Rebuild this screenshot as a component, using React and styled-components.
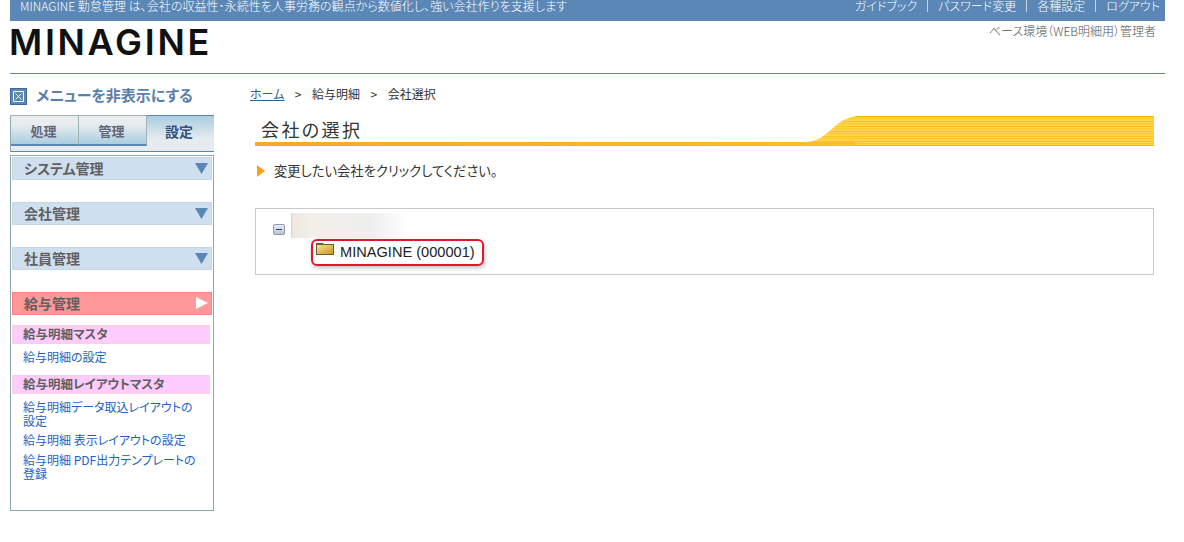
import React from "react";
import styled, { createGlobalStyle } from "styled-components";

const Global = createGlobalStyle`
  html, body { margin: 0; padding: 0; background: #fff; }
  body { font-family: "Noto Sans CJK JP", "Liberation Sans", sans-serif; font-feature-settings: "palt"; }
`;

const Page = styled.div`
  width: 1184px; height: 542px; overflow: hidden; padding-left: 10px; box-sizing: border-box;
`;
const TopBar = styled.div`
  width: 1155px; height: 21px; background: #5a87b6; color: #fff; display: flex; justify-content: space-between;
  font-size: 12px; line-height: 12px; box-sizing: border-box; padding: 0 5px 0 10px;
`;
const Slogan = styled.div`white-space: nowrap; font-weight: 300; letter-spacing: 0.04px;`;
const TopLinks = styled.div`display: flex; white-space: nowrap; font-weight: 300;`;
const TopLink = styled.span`
  padding: 0 10px; border-left: 1px solid #c6d5e5; height: 12px;
  &:first-child { border-left: 0; }
  &:last-child { padding-right: 0; }
`;
const Head = styled.div`
  width: 1155px; height: 52px; border-bottom: 1px solid #5a87b6; display: flex; justify-content: space-between; align-items: flex-start;
`;
const Logo = styled.div`
  font-family: Inter, "Liberation Sans", sans-serif; font-size: 36px; line-height: 30px; font-weight: 600; color: #111; letter-spacing: 2.7px; margin-top: 6px; margin-left: -1px;
`;
const Role = styled.div`font-size: 12px; line-height: 14px; color: #555; margin: 3px 9px 0 0; font-weight: 300;`;
const Main = styled.div`display: flex;`;
const Side = styled.div`width: 204px; flex: none; margin-top: 10px;`;
const Hide = styled.div`display: flex; align-items: center; gap: 9px; height: 20px; font-size: 15px; font-weight: 700; color: #5a7fa8;`;
const HideBox = styled.span`
  width: 15px; height: 15px; border: 1px solid #3f6a96; background: #5a87b6; display: flex; align-items: center; justify-content: center; margin-top: 4px;
`;
const Tabs = styled.div`
  margin-top: 11px; height: 37px; display: flex; border: 1px solid #5a87b6; border-top: 0; border-left-color: #8fa9b3; box-sizing: border-box; background: #e6ebef;
`;
const Tab = styled.div`
  flex: none; width: ${p => p.$on ? "67px" : "68px"}; height: ${p => p.$on ? "36px" : "31px"}; box-sizing: border-box; display: flex; align-items: center; justify-content: center;
  font-weight: 700; padding: ${p => p.$on ? "1px 3px 6px 0" : "1px 2px 0 0"};
  font-size: ${p => p.$on ? "14px" : "13px"};
  color: ${p => p.$on ? "#33507f" : "#667"};
  background: ${p => p.$on ? "linear-gradient(#a9cde0,#e6ebef 65%)" : "linear-gradient(#e8ecee 30%,#a9cde0)"};
  border-top: 1px solid ${p => p.$on ? "#5a87b6" : "#9fb3b3"};
  border-right: ${p => p.$on ? "0" : "1px solid #9fb3b3"};
  border-bottom: ${p => p.$on ? "0" : "2px solid #5a87b6"};
`;
const Menu = styled.div`
  margin-top: 3px; width: 204px; height: 356px; border: 1px solid #8aaab0; box-sizing: border-box; padding: 1px;
`;
const SectionHead = styled.div`
  height: 23px; box-sizing: border-box; margin-bottom: ${p => p.$mb}px; display: flex; align-items: center; justify-content: space-between;
  padding: 0 2px 2px 11px; font-size: 14px; line-height: 18px; font-weight: 700; color: #606060;
  background: ${p => p.$red ? "#ff9999" : "#d0dff0"};
  border: 1px solid ${p => p.$red ? "#ff8080" : "#c8d6df"};
`;
const SubHead = styled.div`
  margin-right: 2px; margin-top: ${p => p.$mt || 0}px; height: 19px; box-sizing: border-box; background: #ffccff; border: 1px solid #fcd0d8; font-size: 12.5px; font-weight: 700; color: #606060; line-height: 16px; padding-left: 10px; white-space: nowrap;
`;
const SideLink = styled.a`
  display: block; margin-left: 11px; font-size: 12px; line-height: 14px; color: #1f5fc4; width: 176px; margin-top: ${p => p.$mt || 0}px;
`;
const Content = styled.div`flex: 1; margin-left: 36px; min-width: 0;`;
const Crumbs = styled.div`
  margin-top: 12px; height: 18px; font-size: 12px; line-height: 16px; color: #333; display: flex; gap: 10.5px;
`;
const CrumbLink = styled.a`color: #2c5f96; text-decoration: underline;`;
const TitleBar = styled.div`
  margin: 12px 0 0 5px; width: 899px; height: 30px; position: relative; display: flex; align-items: flex-end;
`;
const TitleText = styled.div`
  font-size: 18px; line-height: 26px; height: 30px; color: #333; letter-spacing: 2.4px; padding-left: 6px; position: relative;
`;
const Instruction = styled.div`
  margin: 15px 0 0 7px; display: flex; align-items: center; gap: 9px; font-size: 13.3px; line-height: 20px; color: #333;
`;
const Tree = styled.div`
  margin: 27px 0 0 5px; width: 899px; height: 67px; box-sizing: border-box; border: 1px solid #c8c8c8; display: flex; flex-direction: column; padding-top: 4px;
`;
const TreeRow = styled.div`display: flex; align-items: flex-end; padding-left: 17px; height: 25px; gap: 6px;`;
const Minus = styled.span`
  width: 10px; height: 9px; margin-bottom: 3px; border: 1px solid #8c9cb4; border-radius: 2px; background: linear-gradient(#e8ecf4,#b9c5d8); display: flex; align-items: center; justify-content: center;
  &::after { content: ""; width: 6px; height: 1px; background: #445; }
`;
const Blur = styled.span`
  width: 116px; height: 25px; background: linear-gradient(90deg,#d9d3c8,#efe9df 2%,#f3f0ea 20%,#eeeeee 70%,#fff);
`;
const Leaf = styled.div`
  align-self: flex-start; margin: 1px 0 0 55px; height: 27px; width: 173px; box-sizing: border-box; border: 2px solid #e2162b; border-radius: 6px; display: flex; gap: 6px; padding: 1px 0 0 3px;
  font-family: "Liberation Sans", sans-serif; font-size: 14.6px; line-height: 21px; color: #222; box-shadow: 1px 2px 4px rgba(0,0,0,.25); white-space: nowrap;
`;
const FolderIcon = styled.svg`flex: none;`;

const Tri = ({ c = "#5a87b6", right }) => (
  <svg width="14" height="14" viewBox="0 0 14 14">
    <path d={right ? "M1 1 L13 7 L1 13 Z" : "M0 2 H13 L6.5 13 Z"} fill={c} />
  </svg>
);

const Wave = () => (
  <svg width="899" height="30" viewBox="0 0 899 30" style={{ position: "absolute", left: 0, top: 0 }}>
    <defs>
      <pattern id="st" width="5" height="5" patternUnits="userSpaceOnUse">
        <rect width="5" height="5" fill="#ffd455" />
        <rect y="0" width="5" height="1" fill="#fdc31c" />
        <rect y="2" width="5" height="1" fill="#ffc822" />
      </pattern>
      <linearGradient id="ul" x1="0" y1="0" x2="1" y2="0">
        <stop offset="0" stopColor="#f8a62e" />
        <stop offset="1" stopColor="#fdbf20" />
      </linearGradient>
    </defs>
    <path d="M550 26 C575 26 578 0 606 0 H899 V30 H550 Z" fill="url(#st)" />
    <rect y="26" width="600" height="4" fill="url(#ul)" />
    <rect x="600" width="299" height="1" fill="#f8b500" />
    <rect x="600" y="29" width="299" height="1" fill="#f8b500" />
  </svg>
);

const Folder = () => (
  <FolderIcon width="18" height="13" viewBox="0 0 18 13">
    <defs>
      <linearGradient id="fo" x1="0" y1="0" x2="1" y2="1">
        <stop offset="0" stopColor="#fbe38a" />
        <stop offset="1" stopColor="#c8962c" />
      </linearGradient>
    </defs>
    <path d="M0 1 H7 L8 2 H18 V13 H0 Z" fill="#6b5a33" />
    <rect x="1" y="3" width="16" height="9" fill="url(#fo)" />
  </FolderIcon>
);

export default function App() {
  return (
    <Page>
      <Global />
      <TopBar>
        <Slogan>MINAGINE 勤怠管理 は、会社の収益性･永続性を人事労務の観点から数値化し、強い会社作りを支援します</Slogan>
        <TopLinks>
          <TopLink>ガイドブック</TopLink>
          <TopLink>パスワード変更</TopLink>
          <TopLink>各種設定</TopLink>
          <TopLink>ログアウト</TopLink>
        </TopLinks>
      </TopBar>
      <Head>
        <Logo>MINAGINE</Logo>
        <Role>ベース環境（WEB明細用）管理者</Role>
      </Head>
      <Main>
        <Side>
          <Hide>
            <HideBox>
              <svg width="11" height="11" viewBox="0 0 11 11"><path d="M0.5 0.5 H10.5 V10.5 H0.5 Z M2.5 2.5 L8.5 8.5 M8.5 2.5 L2.5 8.5" stroke="#fff" strokeWidth="1" fill="none" /></svg>
            </HideBox>
            メニューを非表示にする
          </Hide>
          <Tabs>
            <Tab>処理</Tab>
            <Tab>管理</Tab>
            <Tab $on>設定</Tab>
          </Tabs>
          <Menu>
            <SectionHead $mb={22}>システム管理<Tri /></SectionHead>
            <SectionHead $mb={22}>会社管理<Tri /></SectionHead>
            <SectionHead $mb={22}>社員管理<Tri /></SectionHead>
            <SectionHead $mb={10} $red>給与管理<Tri c="#fff" right /></SectionHead>
            <SubHead>給与明細マスタ</SubHead>
            <SideLink $mt={6}>給与明細の設定</SideLink>
            <SubHead $mt={11}>給与明細レイアウトマスタ</SubHead>
            <SideLink $mt={6}>給与明細データ取込レイアウトの設定</SideLink>
            <SideLink $mt={5}>給与明細 表示レイアウトの設定</SideLink>
            <SideLink $mt={6}>給与明細 PDF出力テンプレートの登録</SideLink>
          </Menu>
        </Side>
        <Content>
          <Crumbs><CrumbLink>ホーム</CrumbLink><span>&gt;</span><span>給与明細</span><span>&gt;</span><span>会社選択</span></Crumbs>
          <TitleBar><Wave /><TitleText>会社の選択</TitleText></TitleBar>
          <Instruction>
            <svg width="8" height="12" viewBox="0 0 8 12"><path d="M0 0 L8 6 L0 12 Z" fill="#f7a01a" /></svg>
            変更したい会社をクリックしてください。
          </Instruction>
          <Tree>
            <TreeRow><Minus /><Blur /></TreeRow>
            <Leaf><Folder />MINAGINE (000001)</Leaf>
          </Tree>
        </Content>
      </Main>
    </Page>
  );
}
